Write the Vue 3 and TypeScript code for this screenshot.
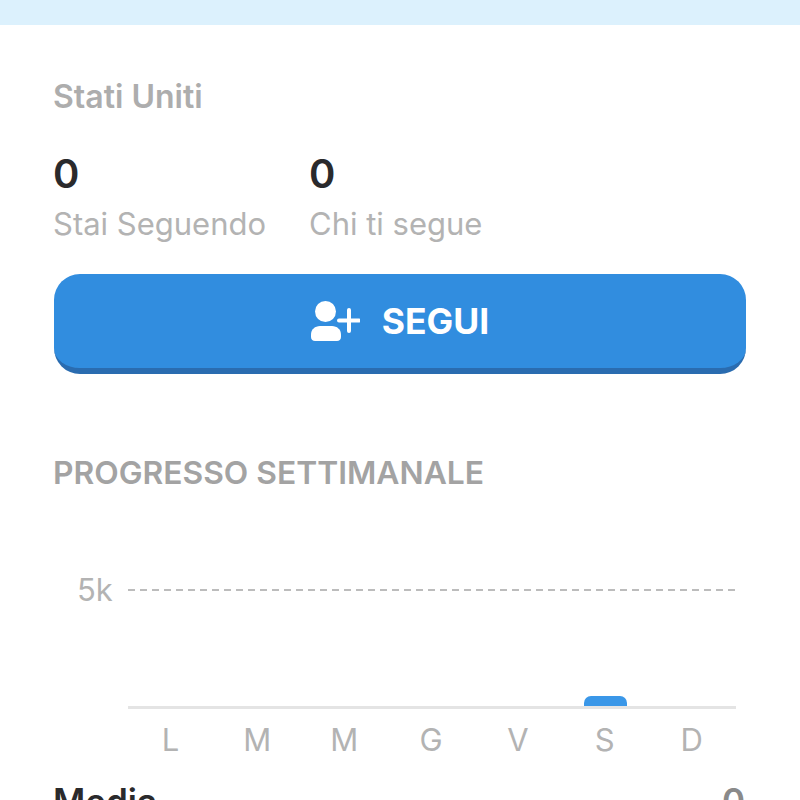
<script setup lang="ts">
const days: { label: string; value: number }[] = [
  { label: 'L', value: 0 },
  { label: 'M', value: 0 },
  { label: 'M', value: 0 },
  { label: 'G', value: 0 },
  { label: 'V', value: 0 },
  { label: 'S', value: 10 },
  { label: 'D', value: 0 },
]
</script>

<template>
  <div class="page">
    <div class="band"></div>
    <main class="content">
      <div class="country">Stati Uniti</div>
      <div class="stats">
        <div class="stat stat-first">
          <div class="num">0</div>
          <div class="lbl">Stai Seguendo</div>
        </div>
        <div class="stat">
          <div class="num">0</div>
          <div class="lbl">Chi ti segue</div>
        </div>
      </div>
      <button class="follow" type="button">
        <svg class="ic" width="49" height="42" viewBox="0 0 49 42" fill="#fff" aria-hidden="true">
          <circle cx="14.500" cy="11.500" r="10.500" />
          <path d="M9 26h12c5 0 9 3.500 9 8.500v2.500c0 2.500-1.800 4-4 4H4c-2.200 0-4-1.500-4-4v-2.500C0 29.500 4 26 9 26z" />
          <path d="M38 10v21M28 20.500h20" fill="none" stroke="#fff" stroke-width="4" stroke-linecap="round" />
        </svg>
        <span class="follow-text">SEGUI</span>
      </button>
      <h2 class="section">PROGRESSO SETTIMANALE</h2>
      <div class="chart">
        <div class="grid-row">
          <span class="ylabel">5k</span>
          <div class="dash"></div>
        </div>
        <div class="plot">
          <div v-for="(d, i) in days" :key="i" class="col">
            <div v-if="d.value" class="bar" :style="{ height: d.value + 'px' }"></div>
          </div>
        </div>
        <div class="xaxis">
          <span v-for="(d, i) in days" :key="i" class="xlabel">{{ d.label }}</span>
        </div>
      </div>
      <div class="media">
        <span>Media</span>
        <span class="media-val">0</span>
      </div>
    </main>
  </div>
</template>

<style>
html, body { margin: 0; background: #fff; overflow: hidden; }
</style>

<style scoped>
.page {
  width: 800px;
  height: 800px;
  overflow: hidden;
  font-family: Inter, "Noto Sans", sans-serif;
  background: #fff;
}
.band { height: 25px; background: #dcf1fd; }
.content { padding: 53px 54px 0; }
.country {
  margin-left: -1px;
  font-size: 32px;
  line-height: 38px;
  font-weight: 600;
  color: #adadad;
}
.stats { display: flex; margin-top: 34px; margin-left: -1px; }
.stat-first { width: 256px; }
.num {
  font-size: 40px;
  line-height: 48px;
  font-weight: 600;
  color: #2a2a2c;
}
.lbl {
  font-size: 31px;
  line-height: 36px;
  color: #b3b3b3;
  margin-top: 8px;
}
.follow {
  box-sizing: border-box;
  width: 692px;
  height: 100px;
  margin-top: 32px;
  display: flex;
  align-items: center;
  justify-content: center;
  gap: 22px;
  padding: 0;
  border: 0;
  border-bottom: 6px solid #2a6cb0;
  border-radius: 26px;
  background: #318ddf;
  color: #fff;
  font: 700 35.500px/40px Inter, sans-serif;
}
.follow-text { padding-top: 2px; }
.section {
  margin: 80px 0 0 -1px;
  font-size: 31.800px;
  line-height: 38px;
  font-weight: 600;
  color: #a3a3a3;
}
.chart { margin-top: 80px; }
.grid-row { display: flex; align-items: center; height: 36px; }
.ylabel {
  width: 74px;
  padding-left: 23px;
  box-sizing: border-box;
  font-size: 31px;
  line-height: 36px;
  color: #b3b3b3;
}
.dash {
  width: 608px;
  height: 2px;
  background: repeating-linear-gradient(90deg, #bcbcbc 0 7px, transparent 7px 12px);
}
.plot {
  display: flex;
  height: 98px;
  margin-left: 74px;
  width: 608px;
  border-bottom: 3px solid #e4e4e4;
  align-items: flex-end;
}
.col { flex: 1; display: flex; justify-content: center; }
.bar {
  width: 43px;
  background: #3a97e8;
  border-radius: 7px 7px 0 0;
}
.xaxis { display: flex; margin-left: 73px; width: 608px; margin-top: 13px; }
.xlabel {
  flex: 1;
  text-align: center;
  font-size: 31px;
  line-height: 36px;
  color: #b3b3b3;
}
.media {
  display: flex;
  justify-content: space-between;
  margin: 23px 0 0 -1px;
  font-size: 35px;
  line-height: 40px;
  font-weight: 600;
  color: #2a2a2c;
}
.media-val { color: #8a8a8a; margin-right: 1px; }
</style>
